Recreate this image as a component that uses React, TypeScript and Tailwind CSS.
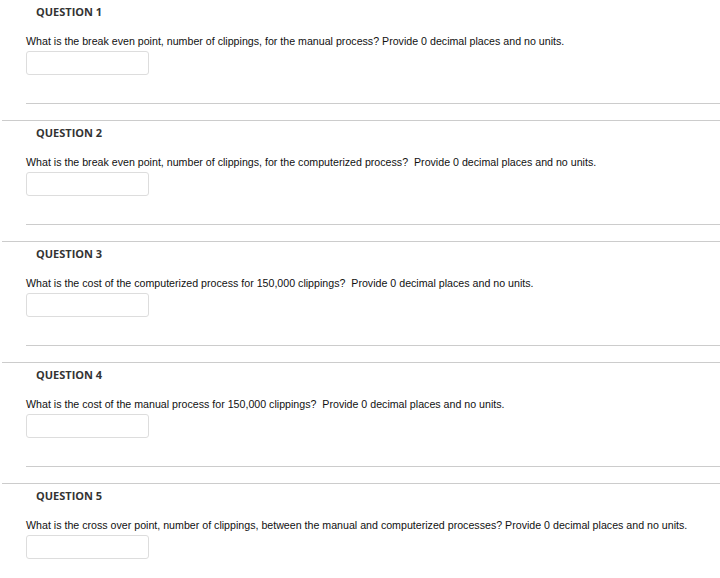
const questions = [
  'What is the break even point, number of clippings, for the manual process? Provide 0 decimal places and no units.',
  'What is the break even point, number of clippings, for the computerized process?  Provide 0 decimal places and no units.',
  'What is the cost of the computerized process for 150,000 clippings?  Provide 0 decimal places and no units.',
  'What is the cost of the manual process for 150,000 clippings?  Provide 0 decimal places and no units.',
  'What is the cross over point, number of clippings, between the manual and computerized processes? Provide 0 decimal places and no units.',
];

function Question({ num, text }: { num: number; text: string }) {
  return (
    <div className="border-b border-[#cccccc] pt-[4px] pb-[16px]">
      <h3
        className="pl-[34px] text-[11px] leading-[16px] font-bold text-[#333333]"
        style={{ fontFamily: '"Open Sans", Arial, sans-serif' }}
      >
        QUESTION {num}
      </h3>
      <div className="pl-[24px]">
        <p
          className="mt-[15px] text-[10.65px] leading-[13px] text-[#111111] whitespace-pre"
          style={{ fontFamily: '"Liberation Sans", Arial, sans-serif' }}
        >
          {text}
        </p>
        <input
          type="text"
          className="mt-[3px] block h-[24px] w-[123px] rounded-[3px] border border-[#dddddd] bg-white outline-none"
        />
        <div className="mt-[28px] border-b border-[#cccccc]" />
      </div>
    </div>
  );
}

export default function App() {
  return (
    <div className="min-h-[578px] w-[720px] overflow-hidden bg-white pl-[2px]">
      {questions.map((q, i) => (
        <Question key={i} num={i + 1} text={q} />
      ))}
    </div>
  );
}
